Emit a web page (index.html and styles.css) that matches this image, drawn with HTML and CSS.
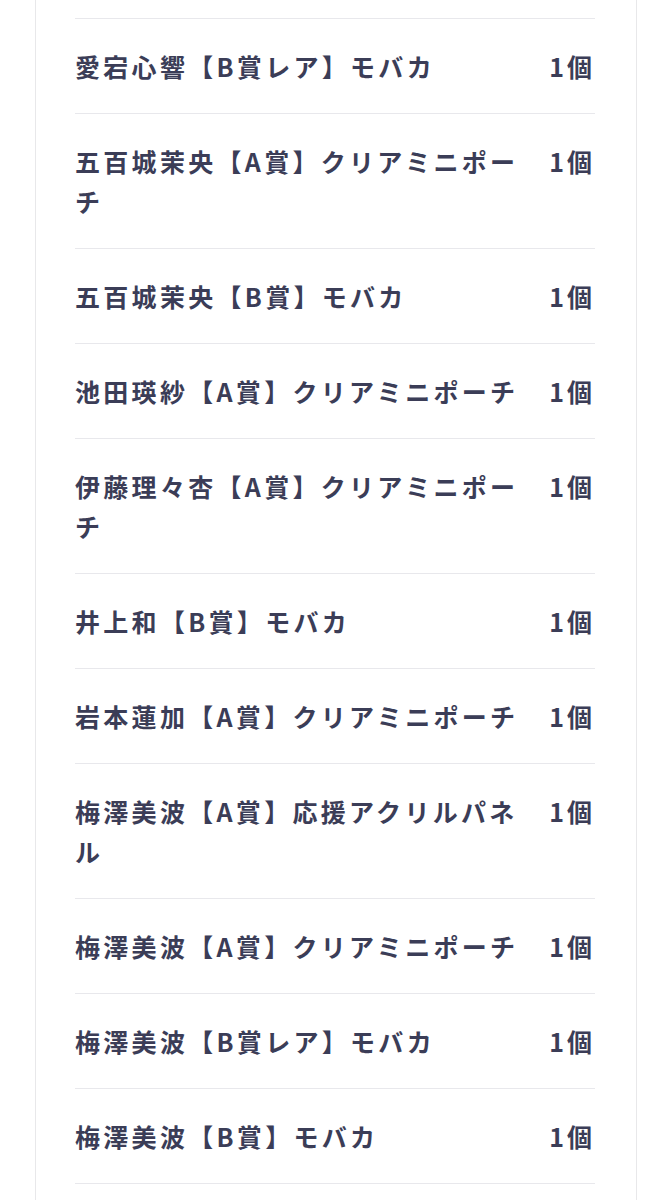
FILE: index.html
```html
<!DOCTYPE html>
<html lang="ja">
<head>
    <meta charset="UTF-8">
    <meta name="viewport" content="width=device-width, initial-scale=1.0">
    <title>当選商品一覧</title>
    <link rel="stylesheet" href="styles.css">
</head>
<body>

    <div class="container">
        <ul class="prize-list">
            <li class="prize-item">
                <span class="prize-name">愛宕心響【B賞レア】モバカ</span>
                <span class="prize-qty">1個</span>
            </li>
            <li class="prize-item">
                <span class="prize-name">五百城茉央【A賞】クリアミニポーチ</span>
                <span class="prize-qty">1個</span>
            </li>
            <li class="prize-item">
                <span class="prize-name">五百城茉央【B賞】モバカ</span>
                <span class="prize-qty">1個</span>
            </li>
            <li class="prize-item">
                <span class="prize-name">池田瑛紗【A賞】クリアミニポーチ</span>
                <span class="prize-qty">1個</span>
            </li>
            <li class="prize-item">
                <span class="prize-name">伊藤理々杏【A賞】クリアミニポーチ</span>
                <span class="prize-qty">1個</span>
            </li>
            <li class="prize-item">
                <span class="prize-name">井上和【B賞】モバカ</span>
                <span class="prize-qty">1個</span>
            </li>
            <li class="prize-item">
                <span class="prize-name">岩本蓮加【A賞】クリアミニポーチ</span>
                <span class="prize-qty">1個</span>
            </li>
            <li class="prize-item">
                <span class="prize-name">梅澤美波【A賞】応援アクリルパネル</span>
                <span class="prize-qty">1個</span>
            </li>
            <li class="prize-item">
                <span class="prize-name">梅澤美波【A賞】クリアミニポーチ</span>
                <span class="prize-qty">1個</span>
            </li>
            <li class="prize-item">
                <span class="prize-name">梅澤美波【B賞レア】モバカ</span>
                <span class="prize-qty">1個</span>
            </li>
            <li class="prize-item">
                <span class="prize-name">梅澤美波【B賞】モバカ</span>
                <span class="prize-qty">1個</span>
            </li>
        </ul>
    </div>

</body>
</html>
```

FILE: styles.css
```css
body {
    margin: 0;
    background-color: #ffffff;
    font-family: "Noto Sans CJK JP", "Noto Sans", sans-serif;
    color: #3b3d57;
}
.container {
    box-sizing: border-box;
    width: 602px;
    min-height: 1200px;
    margin-left: 35px;
    padding: 18px 41px 0 39px;
    border-left: 1px solid #e8e8ea;
    border-right: 1px solid #e8e8ea;
}
.prize-list {
    list-style: none;
    margin: 0;
    padding: 0;
    border-bottom: 1px solid #e8e8ec;
}
.prize-item {
    display: grid;
    grid-template-columns: 1fr 60px;
    align-items: start;
    padding: 27px 0;
    border-top: 1px solid #e8e8ec;
    font-size: 25px;
    font-weight: 700;
    line-height: 40px;
    letter-spacing: 3.3px;
}
.prize-qty {
    text-align: right;
    letter-spacing: 3px;
}
```
